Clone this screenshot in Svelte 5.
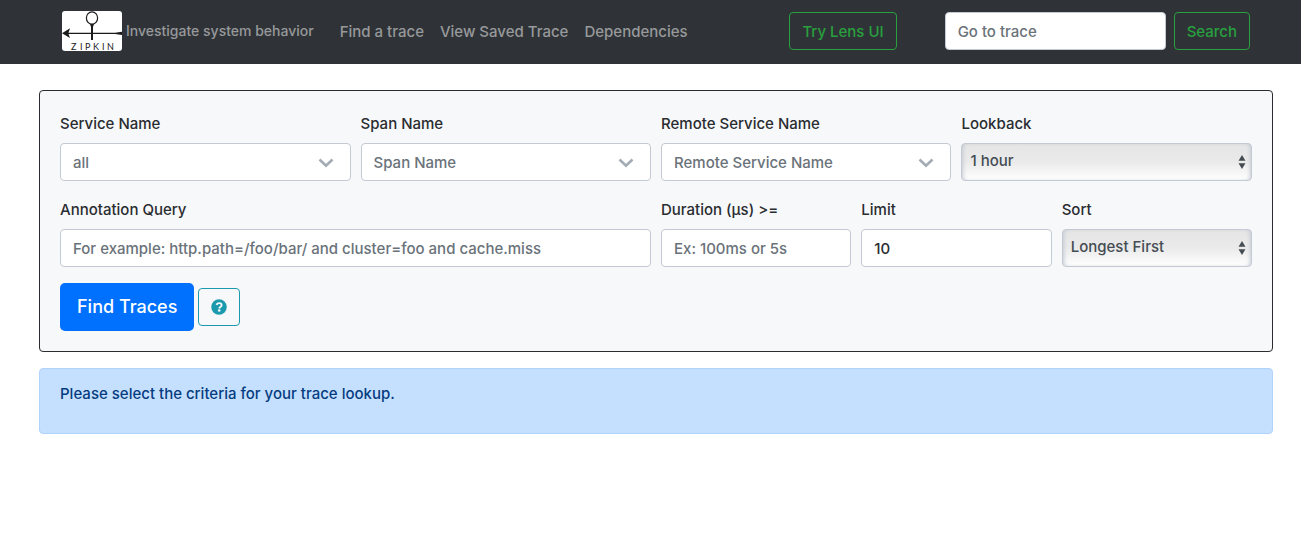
<script>
  const menus = [
    { id: 'service', label: 'Service Name', options: ['all'] },
    { id: 'span', label: 'Span Name', options: ['Span Name'] },
    { id: 'remote', label: 'Remote Service Name', options: ['Remote Service Name'] }
  ];
  let limit = $state('10');
</script>

<header>
  <a class="brand" href="#home">
    <svg class="logo" viewBox="0 0 60 40" role="img" aria-label="Zipkin">
      <rect width="60" height="40" rx="3" fill="#fff" />
      <ellipse cx="30" cy="7" rx="5.6" ry="6.2" fill="none" stroke="#1b1b1b" stroke-width="1.200" />
      <path d="M28 13h4l-1 3v13h-2V16z" fill="#1b1b1b" />
      <path d="M0 22.300l8-5-1.500 4.400H53l7-1v3.200l-7-1H6.500L8 27z" fill="#1b1b1b" />
      <text class="logo-text" y="39" x="9 18 23 31 40 45">ZIPKIN</text>
    </svg>
    <span>Investigate system behavior</span>
  </a>
  <nav>
    <a href="#find">Find a trace</a>
    <a href="#saved">View Saved Trace</a>
    <a href="#dependencies">Dependencies</a>
  </nav>
  <button class="outline green lens" type="button">Try Lens UI</button>
  <form class="goto">
    <input class="control" type="text" placeholder="Go to trace" aria-label="Go to trace" />
    <button class="outline green" type="button">Search</button>
  </form>
</header>

<main>
  <form class="card">
    <div class="fields">
      {#each menus as menu}
        <div class="field three">
          <label for={menu.id}>{menu.label}</label>
          <div class="menu">
            <select class="control" id={menu.id}>
              {#each menu.options as option}<option>{option}</option>{/each}
            </select>
            <svg viewBox="0 0 16 10" aria-hidden="true">
              <path d="M1.500 1.500L8 7.700l6.500-6.200" fill="none" stroke="#a3acb5" stroke-width="2.600" />
            </svg>
          </div>
        </div>
      {/each}
      <div class="field three">
        <label for="lookback">Lookback</label>
        <div class="menu native">
          <select class="control" id="lookback"><option>1 hour</option></select>
          <svg viewBox="0 0 8 14" aria-hidden="true"><path d="M4 0l3.500 5.800h-7zM4 14l3.500-5.800h-7z" fill="#454c53" /></svg>
        </div>
      </div>
      <div class="field six">
        <label for="annotation">Annotation Query</label>
        <input class="control" id="annotation" type="text" placeholder="For example: http.path=/foo/bar/ and cluster=foo and cache.miss" />
      </div>
      <div class="field two">
        <label for="duration">Duration (μs) &gt;=</label>
        <input class="control" id="duration" type="text" placeholder="Ex: 100ms or 5s" />
      </div>
      <div class="field two">
        <label for="limit">Limit</label>
        <input class="control" id="limit" type="text" bind:value={limit} />
      </div>
      <div class="field two">
        <label for="sort">Sort</label>
        <div class="menu native">
          <select class="control" id="sort"><option>Longest First</option></select>
          <svg viewBox="0 0 8 14" aria-hidden="true"><path d="M4 0l3.500 5.800h-7zM4 14l3.500-5.800h-7z" fill="#454c53" /></svg>
        </div>
      </div>
    </div>
    <div class="actions">
      <button class="find" type="button">Find Traces</button>
      <button class="outline help" type="button" aria-label="Help">
        <svg viewBox="0 0 512 512" aria-hidden="true">
          <circle cx="256" cy="256" r="248" fill="currentColor" />
          <path d="M174 190c18-38 45-58 86-58 45 0 80 26 80 65 0 58-76 56-76 106" fill="none" stroke="#f7f8fa" stroke-width="60" />
          <circle cx="262" cy="366" r="42" fill="#f7f8fa" />
        </svg>
      </button>
    </div>
  </form>
  <p class="notice">Please select the criteria for your trace lookup.</p>
</main>

<style>
  :global(body) {
    margin: 0;
    background: #fff;
    color: #292c30;
    font: 450 15px/26px Inter, "Liberation Sans", sans-serif;
  }
  :global(*) { box-sizing: border-box; }
  header {
    display: flex;
    align-items: center;
    height: 64px;
    padding: 0 51px 2px 62px;
    background: #2f3337;
  }
  a { color: #97999b; text-decoration: none; white-space: nowrap; }
  .brand { display: flex; align-items: center; gap: 4px; font-size: 14px; }
  .logo { width: 60px; height: 40px; }
  .logo-text { font: 9px Lato, sans-serif; fill: #1b1b1b; }
  nav { display: flex; gap: 16px; margin-left: 26px; padding-top: 2px; }
  button, input, select { font: inherit; margin: 0; }
  .outline {
    height: 38px;
    padding: 2px 12px 0;
    border: 1px solid;
    border-radius: 4px;
    background: transparent;
    white-space: nowrap;
  }
  .green { color: #28a03e; }
  .lens { margin-left: auto; }
  .goto { display: flex; gap: 8px; margin-left: 48px; }
  .goto .control { width: 221px; }
  .control {
    display: block;
    width: 100%;
    height: 38px;
    padding: 0 12px;
    border: 1px solid #c3cad3;
    border-radius: 4px;
    background: #fff;
    color: #292c30;
  }
  .control::placeholder { color: #6a727a; opacity: 1; }
  main { padding: 26px 28px 26px 39px; }
  .card {
    padding: 20px;
    border: 1px solid #292c30;
    border-radius: 4px;
    background: #f7f8fa;
  }
  .fields { display: grid; grid-template-columns: repeat(12, minmax(0, 1fr)); gap: 16px 10px; }
  .three { grid-column: span 3; }
  .six { grid-column: span 6; }
  .two { grid-column: span 2; }
  label { display: block; margin-bottom: 6px; }
  .menu { display: grid; align-items: center; }
  .menu > * { grid-area: 1 / 1; }
  .menu select { appearance: none; padding-top: 2px; color: #6a727a; }
  .menu svg { width: 16px; height: 10px; margin: 2px 17px 0 0; justify-self: end; pointer-events: none; }
  .menu.native select {
    padding: 0 8px 2px;
    color: #454c53;
    background: linear-gradient(#e5e5e5, #eaeaea 50%, #fff);
    box-shadow: inset 3px 0 4px -2px #c3cad3, inset -3px 0 4px -2px #c3cad3;
  }
  .menu.native svg { width: 8px; height: 14px; margin: 0 6px 0 0; }
  .actions { display: flex; align-items: center; gap: 4px; margin-top: 16px; }
  .find {
    height: 48px;
    padding: 0 17px;
    border: 0;
    border-radius: 5px;
    background: #0071ff;
    color: #fff;
    font-size: 18px;
  }
  .help { width: 42px; padding-top: 0; color: #1b9aae; }
  .help svg { display: block; width: 16px; height: 16px; }
  .notice {
    margin: 16px 0 0;
    padding: 12px 20px 26px;
    border: 1px solid #b0d3fc;
    border-radius: 4px;
    background: #c5e0ff;
    color: #053c80;
  }
</style>
